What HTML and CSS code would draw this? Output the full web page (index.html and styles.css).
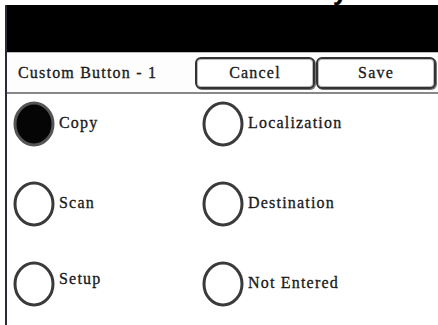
FILE: index.html
```html
<!DOCTYPE html>
<html>
<head>
<meta charset="utf-8">
<link rel="stylesheet" href="styles.css">
</head>
<body>
<div class="caption"><div class="caption-text">y</div></div>
<div class="panel">
  <div class="titlebar"></div>
  <div class="header">
    <div class="title">Custom Button - 1</div>
    <div class="buttons">
      <div class="btn">Cancel</div>
      <div class="btn">Save</div>
    </div>
  </div>
  <div class="options">
    <div class="opt"><svg class="radio" viewBox="0 0 42 46"><ellipse cx="21" cy="23" rx="19" ry="21" class="sel"/></svg><span>Copy</span></div>
    <div class="opt"><svg class="radio" viewBox="0 0 42 46"><ellipse cx="21" cy="23" rx="19" ry="21"/></svg><span>Localization</span></div>
    <div class="opt"><svg class="radio" viewBox="0 0 42 46"><ellipse cx="21" cy="23" rx="19" ry="21"/></svg><span>Scan</span></div>
    <div class="opt"><svg class="radio" viewBox="0 0 42 46"><ellipse cx="21" cy="23" rx="19" ry="21"/></svg><span>Destination</span></div>
    <div class="opt"><svg class="radio" viewBox="0 0 42 46"><ellipse cx="21" cy="23" rx="19" ry="21"/></svg><span class="up">Setup</span></div>
    <div class="opt"><svg class="radio" viewBox="0 0 42 46"><ellipse cx="21" cy="23" rx="19" ry="21"/></svg><span>Not Entered</span></div>
  </div>
</div>
</body>
</html>
```
FILE: styles.css
```css
html, body {
  margin: 0;
  padding: 0;
  background: #fff;
}
body {
  width: 438px;
  height: 325px;
  overflow: hidden;
  font-family: "Liberation Serif", "Times New Roman", serif;
  font-size: 16px;
  letter-spacing: 1.2px;
  color: #111;
  -webkit-text-stroke: 0.3px #111;
}
.caption {
  height: 5px;
  overflow: hidden;
  padding-left: 333px;
}
.caption-text {
  font-family: "Liberation Sans", Arial, sans-serif;
  font-weight: bold;
  font-size: 26px;
  line-height: 26px;
  margin-top: -22px;
  letter-spacing: 0;
  color: #000;
}
.panel {
  margin-left: 5px;
  border-left: 2px solid #2a2a3a;
  height: 320px;
}
.titlebar {
  height: 47px;
  background: #000;
  border-bottom: 1px solid #bbb;
}
.header {
  display: flex;
  align-items: center;
  height: 39px;
  border-bottom: 2px solid #888;
  background: #fdfdfd;
}
.title {
  padding-left: 11px;
  width: 177px;
  color: #222;
}
.buttons {
  display: flex;
  gap: 1px;
}
.btn {
  width: 116px;
  height: 28px;
  border: 2px solid #333;
  border-radius: 6px;
  box-shadow: inset 0 0 0 1px #bbb, 1px 1px 0 #777;
  display: flex;
  align-items: center;
  justify-content: center;
  color: #222;
  background: #fff;
}
.options {
  display: grid;
  grid-template-columns: 189px 1fr;
  grid-auto-rows: 80px;
  padding: 7px 0 0 6px;
}
.opt {
  display: flex;
  align-items: flex-start;
}
.opt span {
  margin-top: 13px;
  margin-left: 4px;
  color: #222;
}
.opt span.up {
  margin-top: 9px;
}
.radio {
  width: 42px;
  height: 46px;
  flex: none;
}
.radio ellipse {
  fill: #fff;
  stroke: #3a3a3a;
  stroke-width: 3;
}
.radio ellipse.sel {
  fill: #050505;
  stroke: #555;
}
```
